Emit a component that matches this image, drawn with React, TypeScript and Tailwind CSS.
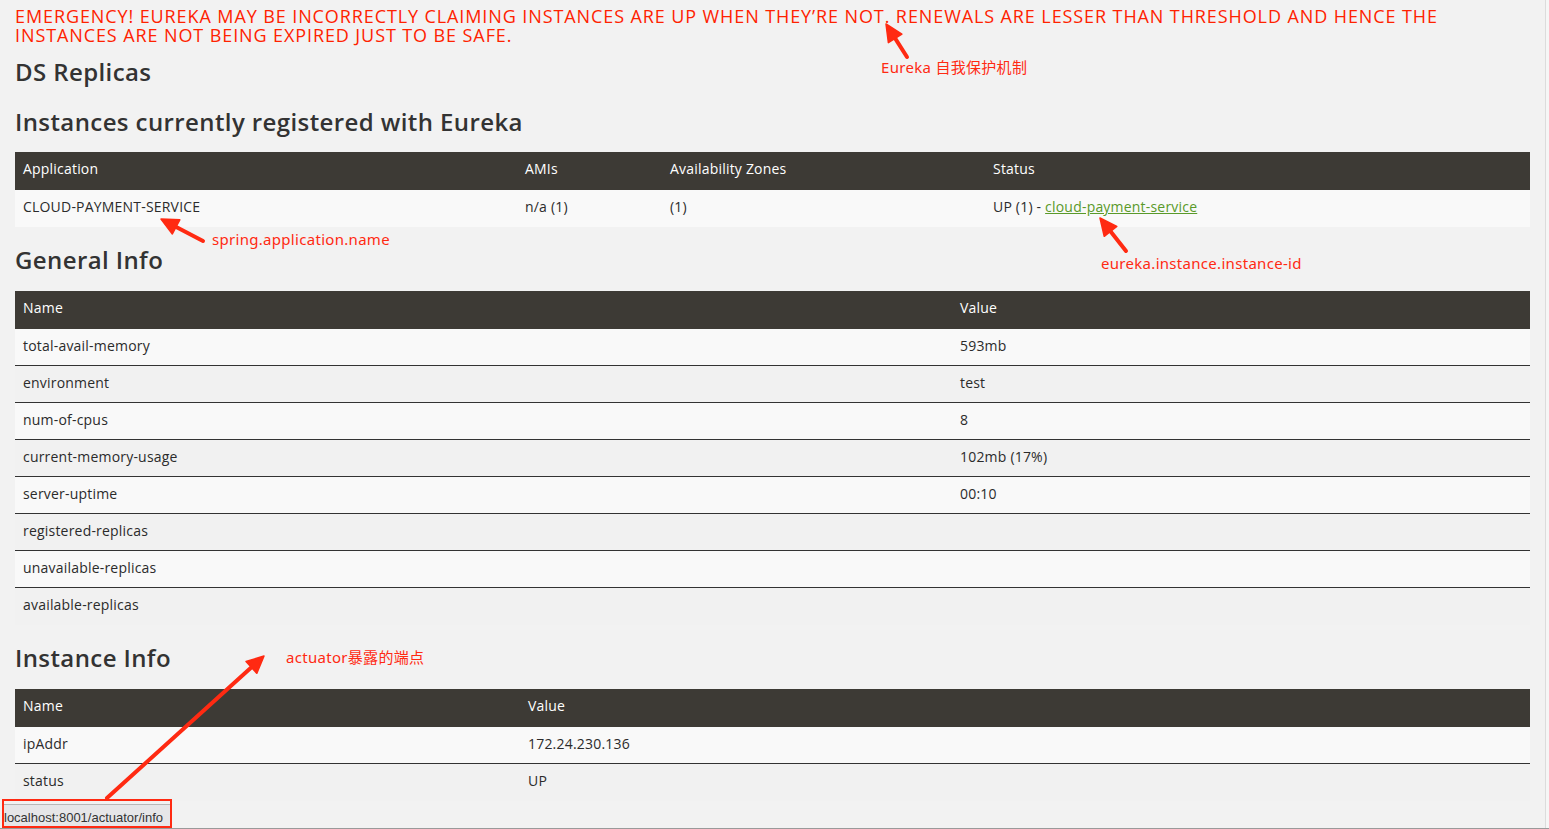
import React from "react";

const headFont = { fontFamily: '"Open Sans", "Noto Sans", sans-serif' };
const noteFont = '"Noto Sans", "Noto Sans CJK SC", sans-serif';

type Pt = [number, number];

function Arrow({ from, to }: { from: Pt; to: Pt }) {
  const dx = to[0] - from[0];
  const dy = to[1] - from[1];
  const len = Math.hypot(dx, dy);
  const ux = dx / len;
  const uy = dy / len;
  const hl = 17;
  const hw = 8;
  const bx = to[0] - ux * hl;
  const by = to[1] - uy * hl;
  const px = -uy;
  const py = ux;
  const pts = `${to[0]},${to[1]} ${bx + px * hw},${by + py * hw} ${bx - px * hw},${by - py * hw}`;
  return (
    <g>
      <line x1={from[0]} y1={from[1]} x2={bx + ux * 2} y2={by + uy * 2} stroke="#ff2a12" strokeWidth={4} strokeLinecap="round" />
      <polygon points={pts} fill="#ff2a12" stroke="#ff2a12" strokeWidth={1.5} strokeLinejoin="round" />
    </g>
  );
}

function Note({ x, y, children }: { x: number; y: number; children: React.ReactNode }) {
  return (
    <text x={x} y={y} fill="#ff2a12" fontSize={15} letterSpacing={0.3} fontFamily={noteFont}>
      {children}
    </text>
  );
}

function Header({ cols, grid }: { cols: string[]; grid: string }) {
  return (
    <div className={`grid ${grid} h-[38px] items-center pb-[5px] bg-[#3d3a35] text-white text-[14px] tracking-[0.2px]`}>
      {cols.map((c, i) => (
        <div key={i} className="px-2">
          {c}
        </div>
      ))}
    </div>
  );
}

function Row({ cells, grid, odd, border }: { cells: React.ReactNode[]; grid: string; odd: boolean; border: boolean }) {
  return (
    <div
      className={`grid ${grid} h-[37px] items-center pb-[4px] text-[14px] tracking-[0.2px] text-[#2b2b2b] ${odd ? "bg-[#f9f9f9]" : "bg-[#f1f1f1]"} ${border ? "border-b border-[#333]" : ""}`}
    >
      {cells.map((c, i) => (
        <div key={i} className="px-2">
          {c}
        </div>
      ))}
    </div>
  );
}

const general: [string, string][] = [
  ["total-avail-memory", "593mb"],
  ["environment", "test"],
  ["num-of-cpus", "8"],
  ["current-memory-usage", "102mb (17%)"],
  ["server-uptime", "00:10"],
  ["registered-replicas", ""],
  ["unavailable-replicas", ""],
  ["available-replicas", ""],
];

const h2 = "text-[24px] leading-[30px] font-semibold tracking-[0.4px] text-[#333]";

export default function App() {
  return (
    <div className="relative h-[829px] w-full overflow-hidden bg-[#f2f2f2] flex" style={headFont}>
      <div className="flex-1 flex flex-col px-[15px] pt-[7px]">
        <div className="text-[18px] leading-[19px] text-[#ff2200] uppercase tracking-[0.9px]">
          EMERGENCY! EUREKA MAY BE INCORRECTLY CLAIMING INSTANCES ARE UP WHEN THEY’RE NOT. RENEWALS ARE LESSER THAN THRESHOLD AND HENCE THE INSTANCES ARE NOT BEING EXPIRED JUST TO BE SAFE.
        </div>
        <h2 className={`mt-[12px] ${h2}`}>DS Replicas</h2>
        <h2 className={`mt-[20px] ${h2}`}>Instances currently registered with Eureka</h2>
        <div className="mt-[15px]">
          <Header cols={["Application", "AMIs", "Availability Zones", "Status"]} grid="grid-cols-[502px_145px_323px_1fr]" />
          <Row
            grid="grid-cols-[502px_145px_323px_1fr]"
            odd
            border={false}
            cells={[
              "CLOUD-PAYMENT-SERVICE",
              "n/a (1)",
              "(1)",
              <span>
                UP (1) - <span className="text-[#5a9a2a] underline">cloud-payment-service</span>
              </span>,
            ]}
          />
        </div>
        <h2 className={`mt-[18px] ${h2}`}>General Info</h2>
        <div className="mt-[16px]">
          <Header cols={["Name", "Value"]} grid="grid-cols-[937px_1fr]" />
          {general.map((r, i) => (
            <Row key={r[0]} grid="grid-cols-[937px_1fr]" odd={i % 2 === 0} border={i < general.length - 1} cells={[r[0], r[1]]} />
          ))}
        </div>
        <h2 className={`mt-[18px] ${h2}`}>Instance Info</h2>
        <div className="mt-[16px]">
          <Header cols={["Name", "Value"]} grid="grid-cols-[505px_1fr]" />
          <Row grid="grid-cols-[505px_1fr]" odd border cells={["ipAddr", "172.24.230.136"]} />
          <Row grid="grid-cols-[505px_1fr]" odd={false} border={false} cells={["status", "UP"]} />
        </div>
      </div>
      <div className="w-[4px] border-l border-[#dcdcdc] bg-[#f6f6f6]" />

      {/* browser status bar tooltip with annotation outline */}
      <div className="absolute left-0 right-0 bottom-0 h-[30px] border-b border-[#9a9a9a]">
        <div className="ml-[2px] h-full w-[170px] border-2 border-[#ff2a12] flex items-end">
          <div
            className="h-[22px] w-[166px] bg-[#e6e6e8] border-t border-[#b8b8b8] flex items-center pt-[4px] text-[13px] text-[#333]"
            style={{ fontFamily: '"Liberation Sans", Arial, sans-serif' }}
          >
            localhost:8001/actuator/info
          </div>
        </div>
      </div>

      {/* annotations */}
      <svg className="absolute inset-0 pointer-events-none" width="1549" height="829">
        <Arrow from={[907, 57]} to={[886, 24]} />
        <Arrow from={[203, 241]} to={[161, 219]} />
        <Arrow from={[1126, 251]} to={[1100, 218]} />
        <Arrow from={[107, 798]} to={[264, 656]} />
        <Note x={881} y={73}>Eureka 自我保护机制</Note>
        <Note x={212} y={245}>spring.application.name</Note>
        <Note x={1101} y={269}>eureka.instance.instance-id</Note>
        <Note x={286} y={663}>actuator暴露的端点</Note>
      </svg>
    </div>
  );
}
